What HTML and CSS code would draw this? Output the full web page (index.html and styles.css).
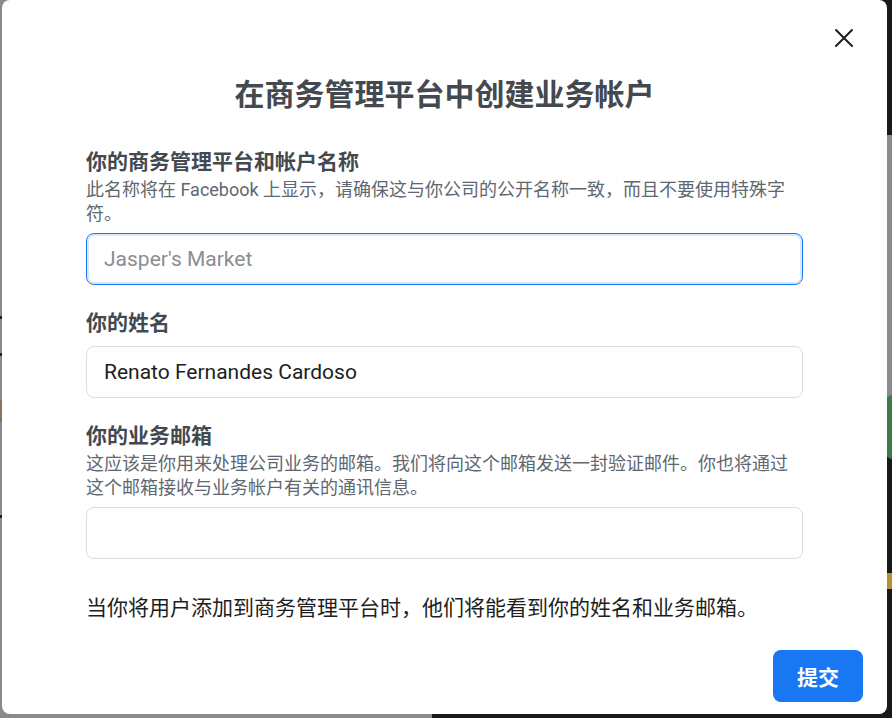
FILE: index.html
```html
<!DOCTYPE html>
<html lang="zh-CN">
<head>
<meta charset="utf-8">
<title>在商务管理平台中创建业务帐户</title>
<link rel="stylesheet" href="styles.css">
</head>
<body>
<div class="page">
  <div class="bg-top-right"></div>
  <div class="bg-right-low"></div>
  <div class="bg-green"></div>
  <div class="bg-yellow"></div>
  <div class="bg-bottom-right"></div>
  <div class="bg-mark m1"></div>
  <div class="bg-mark m2"></div>
  <div class="bg-mark m3"></div>
  <div class="bg-brown"></div>
</div>

<div class="modal" role="dialog">
  <button class="close" aria-label="关闭">
    <svg width="20" height="20" viewBox="0 0 20 20"><path d="M2 2 L18 18 M18 2 L2 18" stroke="#1c1e21" stroke-width="2" stroke-linecap="round" fill="none"/></svg>
  </button>
  <h1 class="title">在商务管理平台中创建业务帐户</h1>

  <div class="field">
    <div class="label">你的商务管理平台和帐户名称</div>
    <div class="desc">此名称将在 Facebook 上显示，请确保这与你公司的公开名称一致，而且不要使用特殊字符。</div>
    <input class="input focused" type="text" placeholder="Jasper's Market">
  </div>

  <div class="field">
    <div class="label">你的姓名</div>
    <input class="input" type="text" value="Renato Fernandes Cardoso">
  </div>

  <div class="field">
    <div class="label">你的业务邮箱</div>
    <div class="desc">这应该是你用来处理公司业务的邮箱。我们将向这个邮箱发送一封验证邮件。你也将通过这个邮箱接收与业务帐户有关的通讯信息。</div>
    <input class="input" type="text">
  </div>

  <p class="note">当你将用户添加到商务管理平台时，他们将能看到你的姓名和业务邮箱。</p>

  <div class="actions">
    <button class="submit">提交</button>
  </div>
</div>
</body>
</html>
```

FILE: styles.css
```css
* { box-sizing: border-box; }
html, body { margin: 0; padding: 0; }
body {
  width: 892px;
  height: 718px;
  overflow: hidden;
  background: #898a8b;
  font-family: Roboto, "Noto Sans CJK SC", sans-serif;
}
.page { position: relative; width: 892px; height: 718px; overflow: hidden; }
.bg-top-right { position: absolute; right: 0; top: 0; width: 20px; height: 135px; background: #18191a; }
.bg-right-low { position: absolute; right: 0; top: 420px; width: 20px; height: 298px; background: #18191a; }
.bg-green { position: absolute; left: 870px; top: 392px; width: 70px; height: 70px; border-radius: 50%; background: #3c7a4a; }
.bg-yellow { position: absolute; right: 0; top: 573px; width: 6px; height: 16px; background: #b8902e; }
.bg-bottom-right { position: absolute; left: 432px; bottom: 0; width: 460px; height: 6px; background: #18191a; }
.bg-mark { position: absolute; left: 0; width: 2px; height: 3px; background: #1c1e21; }
.m1 { top: 316px; } .m2 { top: 353px; } .m3 { top: 515px; }
.bg-brown { position: absolute; left: 0; top: 400px; width: 2px; height: 22px; background: #8a7356; }

.modal {
  position: absolute;
  left: 2px;
  top: 0;
  width: 885px;
  height: 714px;
  background: #fff;
  border-radius: 8px;
  padding: 77px 84px 0 84px;
  display: flex;
  flex-direction: column;
}
.close {
  position: absolute;
  right: 32px;
  top: 27px;
  width: 22px;
  height: 22px;
  padding: 0;
  border: 0;
  background: transparent;
  display: flex;
  align-items: center;
  justify-content: center;
}
.title {
  margin: 0 0 35px;
  font-size: 30px;
  line-height: 36px;
  font-weight: 700;
  color: #444950;
  text-align: center;
}
.field { display: flex; flex-direction: column; margin-bottom: 24px; }
.label {
  font-size: 21px;
  line-height: 28px;
  font-weight: 700;
  color: #444950;
}
.desc {
  margin-top: 2px;
  padding-right: 6px;
  font-size: 18px;
  line-height: 24px;
  color: #606770;
}
.input {
  margin-top: 9px;
  width: 100%;
  height: 52px;
  border: 1px solid #dadde1;
  border-radius: 8px;
  padding: 0 17px;
  font-family: Roboto, "Noto Sans CJK SC", sans-serif;
  font-size: 21px;
  color: #1c1e21;
  background: #fff;
  outline: none;
}
.desc + .input { margin-top: 7px; }
.input::placeholder { color: #8a8d91; }
.focused {
  border-color: #1877f2;
  box-shadow: inset 0 0 0 2px #dbe8fb;
}
.note {
  margin: 13px 0 0;
  font-size: 21px;
  line-height: 24px;
  color: #1c1e21;
}
.actions {
  margin-top: auto;
  margin-right: -60px;
  padding-bottom: 12px;
  display: flex;
  justify-content: flex-end;
}
.submit {
  width: 90px;
  height: 52px;
  border: 0;
  border-radius: 8px;
  background: #1877f2;
  color: #fff;
  font-family: Roboto, "Noto Sans CJK SC", sans-serif;
  font-size: 21px;
  font-weight: 700;
}
```
